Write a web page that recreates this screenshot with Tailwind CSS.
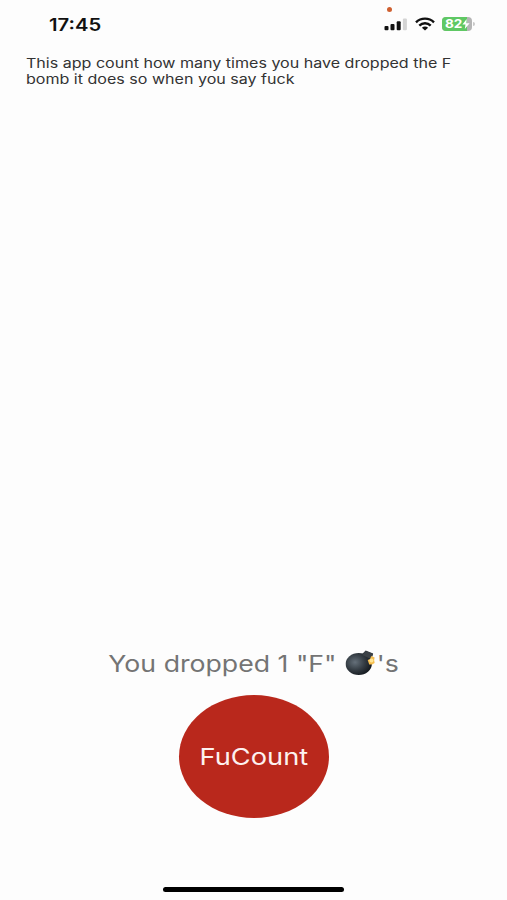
<!DOCTYPE html>
<html lang="en">
<head>
    <meta charset="UTF-8">
    <meta name="viewport" content="width=device-width, initial-scale=1.0">
    <title>FuCount</title>
    <script src="https://cdn.jsdelivr.net/npm/@tailwindcss/browser@4"></script>
</head>
<body class="bg-[#fdfdfd] font-['Inter',sans-serif]">
    <div class="h-[900px] w-[507px] flex flex-col overflow-hidden">
        <!-- Status bar -->
        <header class="relative h-[50px] shrink-0 flex justify-between items-start pl-[49px] pr-8">
            <div class="mt-[15px] text-[17px] leading-5 font-semibold text-[#111] origin-left scale-x-[1.19] whitespace-nowrap">17:45</div>
            <span class="absolute left-[387px] top-[7px] w-[5px] h-[5px] rounded-full bg-[#cf6030]"></span>
            <div class="mt-[17px] flex items-start">
                <!-- Signal -->
                <svg class="w-[24px] h-[14px]" viewBox="0 0 24 14">
                    <rect x="0.5" y="9" width="4" height="4.3" rx="1" fill="#111"/>
                    <rect x="6.5" y="7" width="4" height="6.3" rx="1" fill="#111"/>
                    <rect x="12.7" y="4.2" width="4" height="9.1" rx="1" fill="#111"/>
                    <rect x="18.9" y="1.5" width="4" height="11.8" rx="1" fill="#d4d4d4"/>
                </svg>
                <!-- Wifi -->
                <svg class="ml-[7px] w-[20px] h-[14px]" viewBox="0 0 20 14" fill="none" stroke="#111" stroke-width="2.4">
                    <path d="M1 5.3C6 0.4 14 0.4 19 5.3"/>
                    <path d="M4.3 8.6C7.6 5.4 12.4 5.4 15.7 8.6"/>
                    <path d="M10 13.4L6.9 10.7C8.7 9.2 11.3 9.2 13.1 10.7Z" fill="#111" stroke="none"/>
                </svg>
                <!-- Battery -->
                <div class="ml-[7px] flex items-center">
                    <div class="relative w-[30px] h-[14px] rounded-[4px] overflow-hidden bg-[#b5b5b5]">
                        <div class="absolute inset-y-0 left-0 w-[25px] bg-[#5fc864]"></div>
                        <div class="absolute left-[3px] top-0 text-[12px] leading-[14px] font-bold text-white origin-left scale-x-[1.13]">82</div>
                        <svg class="absolute left-[20px] top-[2px] w-[8px] h-[10px]" viewBox="0 0 8 10">
                            <path d="M4.7 0L0.4 5.6H3.5L2.8 10L7.6 4.2H4.4Z" fill="#fff"/>
                        </svg>
                    </div>
                    <span class="ml-[1px] w-[2px] h-[4px] rounded-r-full bg-[#c8c8c8]"></span>
                </div>
            </div>
        </header>

        <p class="mt-[5px] ml-[26px] w-[360px] text-[13px] leading-4 text-[#333] whitespace-nowrap origin-left scale-x-[1.235]">
            This app count how many times you have dropped the F<br>bomb it does so when you say fuck
        </p>

        <!-- Counter -->
        <main class="mt-auto flex flex-col items-center">
            <div class="flex items-center h-8 text-[22.5px] text-[#747474] whitespace-nowrap scale-x-[1.185]">
                <span class="mt-[1px]">You dropped 1 "F"</span>
                <svg class="ml-[7px] mr-[1px] w-[26px] h-[26px]" viewBox="0 0 31 26" preserveAspectRatio="none">
                    <defs>
                        <radialGradient id="bomb" cx="0.36" cy="0.42" r="0.65">
                            <stop offset="0" stop-color="#65707a"/>
                            <stop offset="0.55" stop-color="#353d44"/>
                            <stop offset="1" stop-color="#14191e"/>
                        </radialGradient>
                    </defs>
                    <path d="M17 4L20.5 0.5L28 3.5L26 10L21 9Z" fill="#30363b"/>
                    <ellipse cx="13.5" cy="14" rx="13.2" ry="11" fill="url(#bomb)"/>
                    <path d="M17 5L20.5 1L28 4L25.5 9Z" fill="#3b4146"/>
                    <path d="M26 6L29.5 7.5L29 10L29.5 13L27 14.5L24 14.5L23.2 12L22.5 10L25 9Z" fill="#f5bd4e"/>
                    <circle cx="26.3" cy="10.5" r="2" fill="#ffe596"/>
                </svg>
                <span class="mt-[1px]">'s</span>
            </div>
            <button class="mt-4 w-[150px] h-[123px] rounded-[50%] bg-[#b9281c] flex items-center justify-center">
                <span class="mt-[2px] text-[23px] text-[#fdf1f0] scale-x-[1.185]">FuCount</span>
            </button>
        </main>

        <!-- Home indicator -->
        <div class="mt-[69px] mb-2 mx-auto w-[181px] h-[5px] shrink-0 rounded-full bg-black"></div>
    </div>
</body>
</html>
